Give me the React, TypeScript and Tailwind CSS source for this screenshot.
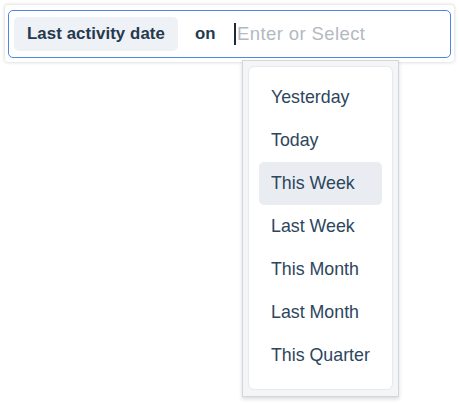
import React from "react";

const options = ["Yesterday", "Today", "This Week", "Last Week", "This Month", "Last Month", "This Quarter"];

export default function App() {
    const active = "This Week";

    return (
        <div className="relative w-[459px] h-[403px] bg-white overflow-hidden" style={{ fontFamily: '"Liberation Sans", Arial, sans-serif' }}>
            <div className="pt-[5px] pl-[5px]">
                <div className="w-[449px] h-[57px] p-[3px] pt-[5px] rounded-[3px] bg-white shadow-[0_0_3px_1px_rgba(0,0,0,0.12)]">
                    <div className="flex items-center h-[48px] rounded-[5px] border-[1.5px] border-[#4f86e4] pl-[5px]">
                        <div className="flex items-center h-[34px] px-[13px] rounded-[5px] bg-[#eef1f5] text-[16.8px] font-bold text-[#25394f] tracking-[0.1px] whitespace-nowrap">
                            Last activity date
                        </div>
                        <span className="ml-[17px] text-[16.8px] font-bold text-[#25394f]">on</span>
                        <div className="ml-[19px] flex items-center">
                            <span className="w-[1.5px] h-[22px] bg-[#1f2a36]"></span>
                            <span className="ml-[1px] text-[18.5px] tracking-[0.4px] text-[#b3b9c1] whitespace-nowrap">Enter or Select</span>
                        </div>
                    </div>
                </div>
            </div>

            <div className="absolute left-[242px] top-[60px] w-[157px] h-[337px] bg-[#f4f5f7] border border-[#d3d6da] shadow-[0_2px_4px_rgba(0,0,0,0.15)] p-[5px] pb-[6px]">
                <div className="h-full rounded-[6px] bg-white border border-[#e6e9ed] pt-[9px] pl-[10px] pr-[10px]">
                    {options.map(o => (
                        <div key={o} className={"flex items-center h-[43px] px-[12px] rounded-[5px] text-[17.8px] text-[#2c465e] whitespace-nowrap " + (o === active ? "bg-[#e9edf2]" : "")}>
                            {o}
                        </div>
                    ))}
                </div>
            </div>
        </div>
    );
}
